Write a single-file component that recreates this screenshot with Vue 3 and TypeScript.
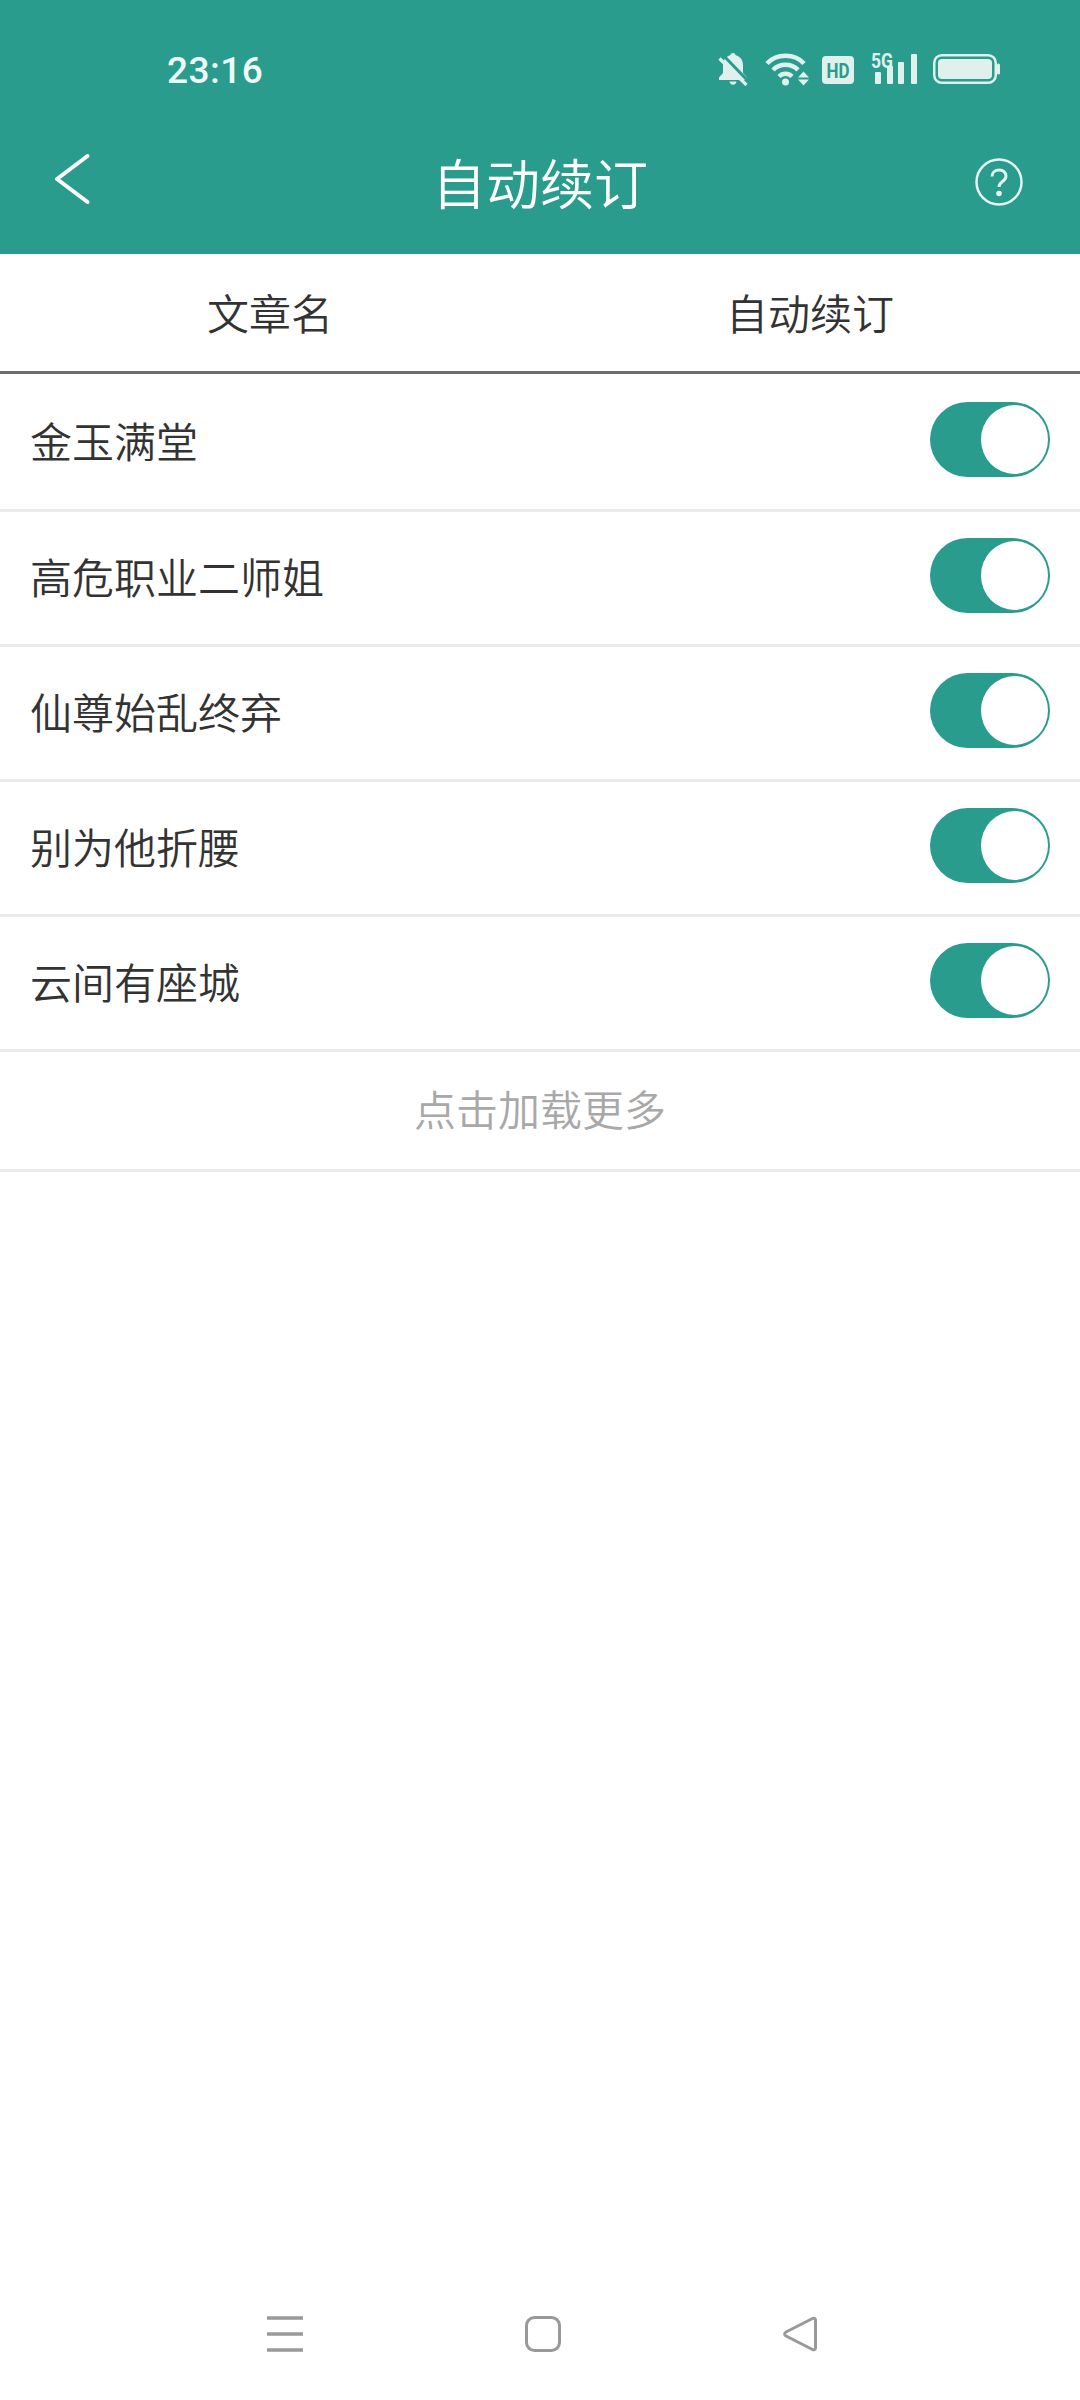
<script setup lang="ts">
interface Book {
  id: number
  title: string
  on: boolean
}

const books: Book[] = [
  { id: 1, title: '金玉满堂', on: true },
  { id: 2, title: '高危职业二师姐', on: true },
  { id: 3, title: '仙尊始乱终弃', on: true },
  { id: 4, title: '别为他折腰', on: true },
  { id: 5, title: '云间有座城', on: true }
]
</script>

<template>
  <div class="page">
    <header class="header">
      <div class="status">
        <span class="time">23:16</span>
        <div class="status-icons">
          <!-- 静音 -->
          <svg class="ic-bell" width="30" height="34" viewBox="0 0 30 34">
            <path d="M15 1c1.500 0 2.500 1 2.700 2.300C22.500 4.500 25 8.500 25 13v8l4 4.500V28H1v-2.500l4-4.500v-8C5 8.500 7.500 4.500 12.300 3.300 12.500 2 13.500 1 15 1z" fill="#dff0ed" />
            <path d="M11.500 29.500h7c-.3 2-1.700 3.300-3.500 3.300s-3.200-1.300-3.500-3.300z" fill="#dff0ed" />
            <path d="M4 2 31 30" stroke="#299c8e" stroke-width="3" />
            <path d="M1.500 6.500 28.500 33" stroke="#dff0ed" stroke-width="3.200" />
          </svg>
          <!-- wifi -->
          <svg class="ic-wifi" width="44" height="34" viewBox="0 0 44 34">
            <g fill="none" stroke="#dff0ed" stroke-width="4.500">
              <path d="M2 11.500C11 1 30 1 39 11.500" />
              <path d="M8 18c6.500-7 18.500-7 25 0" />
              <path d="M14 24.500c3.500-3.600 9.500-3.600 13 0" />
            </g>
            <circle cx="20.500" cy="30" r="3.500" fill="#dff0ed" />
            <path d="M33 25.500 38.500 19.500l5.500 6zM33 27.500h11L38.500 33.500z" fill="#dff0ed" />
          </svg>
          <!-- HD -->
          <svg class="ic-hd" width="32" height="28" viewBox="0 0 32 28">
            <rect width="32" height="28" rx="4" fill="#dff0ed" />
            <text x="16" y="21.500" text-anchor="middle" class="hd-text" textLength="23" lengthAdjust="spacingAndGlyphs">HD</text>
          </svg>
          <!-- 5G 信号 -->
          <svg class="ic-signal" width="46" height="39" viewBox="0 -6 46 39">
            <text x="0" y="15.500" class="g-text" textLength="22" lengthAdjust="spacingAndGlyphs">5G</text>
            <rect x="4" y="20" width="6" height="12" rx="1" fill="#dff0ed" />
            <rect x="16" y="14" width="6" height="18" rx="1" fill="#dff0ed" />
            <rect x="27" y="10" width="6" height="22" rx="1" fill="#dff0ed" />
            <rect x="40" y="2" width="6" height="30" rx="1" fill="#dff0ed" />
          </svg>
          <!-- 电池 -->
          <svg class="ic-battery" width="67" height="30" viewBox="0 0 67 30">
            <rect x="1.250" y="1.250" width="61.500" height="27.500" rx="7.500" fill="none" stroke="#dff0ed" stroke-width="2.500" />
            <rect x="5" y="5" width="54" height="20" rx="4" fill="#dff0ed" />
            <rect x="64" y="9.500" width="3" height="11" rx="1.500" fill="#dff0ed" />
          </svg>
        </div>
      </div>
      <div class="toolbar">
        <svg class="back" width="38" height="52" viewBox="0 0 38 52">
          <path d="M33.500 3 3 26l30.500 23" fill="none" stroke="#fff" stroke-width="4" stroke-linecap="round" stroke-linejoin="round" />
        </svg>
        <h1 class="title">自动续订</h1>
        <svg class="help" width="48" height="48" viewBox="0 0 48 48">
          <circle cx="24" cy="24" r="22.500" fill="none" stroke="#e6f4f1" stroke-width="2.500" />
          <path d="M17 18.500c0-4 3-6.500 7-6.500s7 2.600 7 6c0 2.600-1.500 4-3.500 5.400-2 1.400-3.500 2.700-3.500 5.600" fill="none" stroke="#e6f4f1" stroke-width="3" />
          <circle cx="24" cy="35.500" r="2.800" fill="#e6f4f1" />
        </svg>
      </div>
    </header>

    <div class="tabs">
      <span>文章名</span>
      <span>自动续订</span>
    </div>

    <ul class="list">
      <li v-for="book in books" :key="book.id" class="row">
        <span class="name">{{ book.title }}</span>
        <span class="switch" :class="{ on: book.on }"><i class="knob" /></span>
      </li>
    </ul>

    <div class="more">点击加载更多</div>

    <nav class="navbar">
      <svg width="36" height="36" viewBox="0 0 36 36">
        <path d="M0 2h36M0 18h36M0 34h36" stroke="#999" stroke-width="3.400" />
      </svg>
      <svg width="36" height="36" viewBox="0 0 36 36">
        <rect x="1.500" y="1.500" width="33" height="33" rx="8" fill="none" stroke="#999" stroke-width="3" />
      </svg>
      <svg width="34" height="36" viewBox="0 0 34 36">
        <path d="M29.500 2.500c1.400-.8 3-.1 3 1.500v28c0 1.600-1.600 2.300-3 1.500L3 20c-1.800-1-1.800-3 0-4z" fill="none" stroke="#999" stroke-width="3" stroke-linejoin="round" />
      </svg>
    </nav>
  </div>
</template>

<style>
html,
body {
  margin: 0;
  background: #fff;
}
</style>

<style scoped>
.page {
  width: 1080px;
  height: 2400px;
  display: flex;
  flex-direction: column;
  background: #fff;
  font-family: "Noto Sans CJK SC", "Noto Sans", sans-serif;
  color: #333;
}

.header {
  height: 254px;
  background: #299c8e;
  flex-shrink: 0;
}

.status {
  height: 132px;
  display: flex;
  justify-content: space-between;
  align-items: flex-start;
  padding: 52px 80px 0 167px;
  box-sizing: border-box;
}

.time {
  margin-top: 2px;
  font: 500 37px/34px Roboto, sans-serif;
  color: #f0f8f7;
  letter-spacing: 0.5px;
}

.status-icons {
  display: flex;
  align-items: flex-start;
}

.ic-bell {
  margin-right: 17px;
}

.ic-hd {
  margin: 4px 17px 0 13px;
}

.ic-signal {
  margin-top: -6px;
}

.ic-battery {
  margin: 2px 0 0 16px;
}

.hd-text,
.g-text {
  font-family: Roboto, sans-serif;
  font-weight: 700;
}

.hd-text {
  font-size: 21px;
  fill: #299c8e;
}

.g-text {
  font-size: 20px;
  fill: #dff0ed;
}

.toolbar {
  height: 122px;
  position: relative;
  display: flex;
  align-items: flex-start;
  justify-content: space-between;
  padding: 21px 57px 0 54px;
  box-sizing: border-box;
}

.help {
  margin-top: 5px;
}

.title {
  position: absolute;
  left: 0;
  right: 0;
  top: 0;
  margin: 0;
  text-align: center;
  font-size: 54px;
  line-height: 100px;
  font-weight: 350;
  color: #fff;
}

.tabs {
  height: 114px;
  padding-bottom: 3px;
  display: grid;
  grid-template-columns: 1fr 1fr;
  align-items: center;
  justify-items: center;
  border-bottom: 3px solid #6e6e6e;
  font-size: 42px;
  font-weight: 350;
}

.list {
  margin: 0;
  padding: 0;
  list-style: none;
}

.row {
  height: 135px;
  padding: 0 30px 5px;
  box-sizing: border-box;
  display: flex;
  align-items: center;
  justify-content: space-between;
  border-bottom: 3px solid #ebebeb;
  font-size: 42px;
  font-weight: 350;
}

.row:first-child {
  height: 138px;
  padding-bottom: 4px;
}

.switch {
  width: 120px;
  height: 75px;
  box-sizing: border-box;
  border-radius: 38px;
  background: #ccc;
  display: flex;
  justify-content: flex-start;
  padding: 3px 2px;
}

.switch.on {
  background: #299c8e;
  justify-content: flex-end;
}

.knob {
  width: 67px;
  height: 69px;
  border-radius: 50%;
  background: #fff;
}

.more {
  height: 120px;
  padding-bottom: 7px;
  box-sizing: border-box;
  display: flex;
  align-items: center;
  justify-content: center;
  border-bottom: 3px solid #ebebeb;
  font-size: 42px;
  font-weight: 350;
  color: #a8a8a8;
}

.navbar {
  margin-top: auto;
  height: 132px;
  padding: 0 263px 0 267px;
  box-sizing: border-box;
  display: flex;
  align-items: center;
  justify-content: space-between;
}
</style>
